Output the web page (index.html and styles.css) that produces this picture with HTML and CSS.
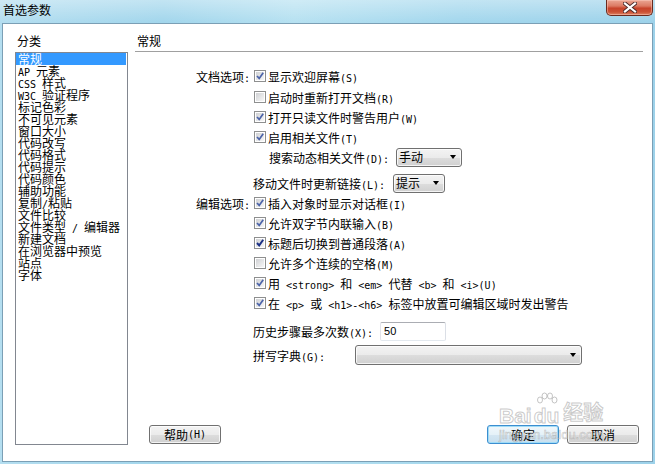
FILE: index.html
```html
<!DOCTYPE html>
<html lang="zh-CN">
<head>
<meta charset="utf-8">
<title>首选参数</title>
<link rel="stylesheet" href="styles.css">
</head>
<body>
<div class="window">
  <div class="titlebar">
    <span class="title">首选参数</span>
    <span class="close">
      <svg width="14" height="11" viewBox="0 0 14 11"><path d="M2 1.5 L12 9.5 M12 1.5 L2 9.5" stroke="#4a2a2a" stroke-width="4" stroke-linecap="square" fill="none"/><path d="M2 1.5 L12 9.5 M12 1.5 L2 9.5" stroke="#fff" stroke-width="2.2" stroke-linecap="square" fill="none"/></svg>
    </span>
  </div>
  <div class="client">
    <div class="side">
      <div class="side-label">分类</div>
      <ul class="list">
        <li class="sel">常规</li>
        <li><span class="l">AP </span>元素</li>
        <li><span class="l">CSS </span>样式</li>
        <li><span class="l">W3C </span>验证程序</li>
        <li>标记色彩</li>
        <li>不可见元素</li>
        <li>窗口大小</li>
        <li>代码改写</li>
        <li>代码格式</li>
        <li>代码提示</li>
        <li>代码颜色</li>
        <li>辅助功能</li>
        <li>复制<span class="l">/</span>粘贴</li>
        <li>文件比较</li>
        <li>文件类型<span class="l"> / </span>编辑器</li>
        <li>新建文档</li>
        <li>在浏览器中预览</li>
        <li>站点</li>
        <li>字体</li>
      </ul>
    </div>
    <div class="main">
      <div class="heading">常规</div>
      <div class="form">
        <div class="row">
          <span class="lbl">文档选项<span class="l">:</span></span>
          <span class="cb"><svg width="8" height="8" viewBox="0 0 8 8"><path d="M1 4 L3.2 6.4 L7.2 0.8" stroke="#4b63a9" stroke-width="1.7" fill="none"/></svg></span>
          <span>显示欢迎屏幕<span class="l">(S)</span></span>
        </div>
        <div class="row g1">
          <span class="lbl"></span>
          <span class="cb"></span>
          <span>启动时重新打开文档<span class="l">(R)</span></span>
        </div>
        <div class="row">
          <span class="lbl"></span>
          <span class="cb"><svg width="8" height="8" viewBox="0 0 8 8"><path d="M1 4 L3.2 6.4 L7.2 0.8" stroke="#4b63a9" stroke-width="1.7" fill="none"/></svg></span>
          <span>打开只读文件时警告用户<span class="l">(W)</span></span>
        </div>
        <div class="row">
          <span class="lbl"></span>
          <span class="cb"><svg width="8" height="8" viewBox="0 0 8 8"><path d="M1 4 L3.2 6.4 L7.2 0.8" stroke="#4b63a9" stroke-width="1.7" fill="none"/></svg></span>
          <span>启用相关文件<span class="l">(T)</span></span>
        </div>
        <div class="row">
          <span class="lbl"></span>
          <span class="sub">搜索动态相关文件<span class="l">(D):</span></span>
          <span class="combo c-manual">手动<i class="arrow"></i></span>
        </div>
        <div class="row g6">
          <span class="lbl"></span>
          <span>移动文件时更新链接<span class="l">(L):</span></span>
          <span class="combo c-prompt">提示<i class="arrow"></i></span>
        </div>
        <div class="row">
          <span class="lbl">编辑选项<span class="l">:</span></span>
          <span class="cb"><svg width="8" height="8" viewBox="0 0 8 8"><path d="M1 4 L3.2 6.4 L7.2 0.8" stroke="#4b63a9" stroke-width="1.7" fill="none"/></svg></span>
          <span>插入对象时显示对话框<span class="l">(I)</span></span>
        </div>
        <div class="row">
          <span class="lbl"></span>
          <span class="cb"><svg width="8" height="8" viewBox="0 0 8 8"><path d="M1 4 L3.2 6.4 L7.2 0.8" stroke="#4b63a9" stroke-width="1.7" fill="none"/></svg></span>
          <span>允许双字节内联输入<span class="l">(B)</span></span>
        </div>
        <div class="row">
          <span class="lbl"></span>
          <span class="cb"><svg width="8" height="8" viewBox="0 0 8 8"><path d="M1 4 L3.2 6.4 L7.2 0.8" stroke="#1a2f85" stroke-width="1.9" fill="none"/></svg></span>
          <span>标题后切换到普通段落<span class="l">(A)</span></span>
        </div>
        <div class="row">
          <span class="lbl"></span>
          <span class="cb"></span>
          <span>允许多个连续的空格<span class="l">(M)</span></span>
        </div>
        <div class="row">
          <span class="lbl"></span>
          <span class="cb"><svg width="8" height="8" viewBox="0 0 8 8"><path d="M1 4 L3.2 6.4 L7.2 0.8" stroke="#4b63a9" stroke-width="1.7" fill="none"/></svg></span>
          <span>用<span class="l"> &lt;strong&gt; </span>和<span class="l"> &lt;em&gt; </span>代替<span class="l"> &lt;b&gt; </span>和<span class="l"> &lt;i&gt;(U)</span></span>
        </div>
        <div class="row">
          <span class="lbl"></span>
          <span class="cb"><svg width="8" height="8" viewBox="0 0 8 8"><path d="M1 4 L3.2 6.4 L7.2 0.8" stroke="#4b63a9" stroke-width="1.7" fill="none"/></svg></span>
          <span>在<span class="l"> &lt;p&gt; </span>或<span class="l"> &lt;h1&gt;-&lt;h6&gt; </span>标签中放置可编辑区域时发出警告</span>
        </div>
        <div class="row g8">
          <span class="lbl"></span>
          <span>历史步骤最多次数<span class="l">(X):</span></span>
          <span class="txt"><span class="num">50</span></span>
        </div>
        <div class="row g4">
          <span class="lbl"></span>
          <span>拼写字典<span class="l">(G):</span></span>
          <span class="combo c-dict"><i class="arrow"></i></span>
        </div>
      </div>
      <div class="buttons">
        <span class="btn">帮助<span class="l">(H)</span></span>
        <span class="btn def">确定</span>
        <span class="btn">取消</span>
      </div>
    </div>
  </div>
  <div class="watermark">
    <div class="wm-logo"><span class="wm-big">Bai</span><span class="wm-du"><svg class="paw" width="24" height="16" viewBox="0 0 24 16"><g fill="none" stroke="rgba(150,150,150,0.55)" stroke-width="1"><ellipse cx="5" cy="8" rx="2.5" ry="3"/><ellipse cx="9.5" cy="4" rx="2.5" ry="3"/><ellipse cx="15" cy="4" rx="2.5" ry="3"/><ellipse cx="19.5" cy="8" rx="2.5" ry="3"/></g></svg><span class="wm-big">du</span></span><span class="wm-big wm-cn">经验</span></div>
    <div class="wm-url">jingyan.baidu.com</div>
  </div>
</div>
</body>
</html>
```

FILE: styles.css
```css
* { box-sizing: border-box; }
html, body { margin: 0; padding: 0; }
body {
  width: 655px;
  height: 464px;
  overflow: hidden;
  font-family: "Noto Sans CJK SC", "Noto Sans", sans-serif;
  font-size: 12px;
  color: #000;
  background: #fff;
}
.l {
  font-family: "DejaVu Sans Mono", "Liberation Mono", monospace;
  font-size: 10px;
  white-space: pre;
}
.window {
  position: relative;
  width: 655px;
  height: 464px;
  display: flex;
  flex-direction: column;
  background:
    linear-gradient(to bottom, rgba(255,255,255,0.35), rgba(255,255,255,0) 22px),
    linear-gradient(to right, #b4def0 0%, #a2d6ec 25%, #b6e1f1 45%, #a3d7ed 70%, #9dd2ea 100%);
}
.titlebar {
  height: 23px;
  display: flex;
  padding: 0 2px 0 3px;
  flex: none;
}
.title {
  margin-top: 2px;
  line-height: 16px;
  height: 16px;
}
.close {
  margin-left: auto;
  width: 47px;
  height: 16px;
  border: 1px solid #6a2a1e;
  border-top: none;
  border-radius: 0 0 5px 5px;
  background: linear-gradient(to bottom, #eba693 0%, #dc7a63 40%, #c7432a 55%, #cb5236 80%, #de8566 100%);
  box-shadow: inset 0 0 0 1px rgba(255,210,200,0.45);
  display: flex;
  align-items: center;
  justify-content: center;
}
.client {
  flex: 1;
  margin: 0 2px 2px;
  border: 1px solid #7b9fb5;
  background: #fff;
  display: flex;
  gap: 7px;
  padding: 10px 9px 16px 12px;
}
.side {
  width: 113px;
  flex: none;
  display: flex;
  flex-direction: column;
}
.side-label {
  height: 14px;
  line-height: 14px;
  margin-bottom: 4px;
  padding-left: 2px;
}
.list {
  flex: 1;
  margin: 0;
  padding: 0 1px 0 0;
  list-style: none;
  border: 1px solid #828790;
}
.list li {
  height: 12px;
  line-height: 12px;
  padding-left: 2px;
  white-space: nowrap;
}
.list li.sel {
  background: #3399ff;
  color: #fff;
}
.main {
  flex: 1;
  display: flex;
  flex-direction: column;
}
.heading {
  height: 18px;
  line-height: 14px;
  padding-left: 2px;
  border-bottom: 1px solid #a0a0a0;
}
.form {
  margin-top: 14px;
}
.row {
  display: flex;
  align-items: center;
  height: 20px;
  white-space: nowrap;
}
.g1 { margin-top: 1px; }
.g4 { margin-top: 4px; }
.g6 { margin-top: 6px; }
.g8 { margin-top: 8px; }
.lbl {
  width: 118px;
  flex: none;
  text-align: right;
  padding-right: 3px;
}
.cb {
  width: 12px;
  height: 12px;
  flex: none;
  margin-left: 1px;
  margin-right: 2px;
  border: 1px solid #8e8f8f;
  padding: 1px;
  background: linear-gradient(135deg, #cfd1d4, #f7f7f7) content-box;
}
.cb svg { display: block; }
.sub { padding-left: 16px; }
.combo {
  display: flex;
  align-items: center;
  height: 19px;
  border: 1px solid #707070;
  border-radius: 3px;
  background: linear-gradient(to bottom, #f3f3f3 0%, #ebebeb 50%, #dddddd 51%, #d0d0d0 100%);
  box-shadow: inset 0 0 0 1px rgba(255,255,255,0.75);
  padding-left: 2px;
  line-height: 14px;
}
.combo .arrow {
  margin-left: auto;
  margin-right: 5px;
  width: 0;
  height: 0;
  border-top: 4px solid #000;
  border-left: 3.5px solid transparent;
  border-right: 3.5px solid transparent;
}
.c-manual { width: 66px; margin-left: 7px; }
.c-prompt { width: 52px; margin-left: 8px; }
.c-dict { width: 227px; height: 20px; margin-left: 30px; }
.txt {
  width: 66px;
  height: 19px;
  margin-left: 7px;
  border: 1px solid;
  border-color: #abadb3 #dbdfe6 #e3e9ef #e2e3ea;
  border-radius: 2px;
  display: flex;
  align-items: center;
  padding-left: 3px;
}
.num {
  font-family: "Liberation Sans", Arial, sans-serif;
  font-size: 11px;
}
.buttons {
  margin-top: auto;
  margin-bottom: 1px;
  display: flex;
  gap: 8px;
  padding: 0 4px 0 14px;
}
.btn {
  width: 72px;
  height: 19px;
  border: 1px solid #707070;
  border-radius: 3px;
  background: linear-gradient(to bottom, #f3f3f3 0%, #ebebeb 50%, #dddddd 51%, #d0d0d0 100%);
  box-shadow: inset 0 0 0 1px rgba(255,255,255,0.75);
  display: flex;
  align-items: center;
  justify-content: center;
  line-height: 14px;
}
.btn.def {
  margin-left: auto;
  border-color: #3c8ed0;
  box-shadow: inset 0 0 0 1px #9fdcf7;
  background: linear-gradient(to bottom, #f0f7fb 0%, #e5f1f8 50%, #d4e6f2 51%, #c8dfee 100%);
}
.watermark {
  position: absolute;
  left: 499px;
  top: 398px;
  pointer-events: none;
}
.wm-logo {
  display: flex;
  align-items: flex-end;
  height: 28px;
}
.wm-big {
  font-family: "Liberation Sans", Arial, sans-serif;
  font-weight: bold;
  font-size: 21px;
  line-height: 20px;
  color: rgba(255,255,255,0.55);
  -webkit-text-stroke: 1px rgba(150,150,150,0.5);
}
.wm-du {
  position: relative;
  display: flex;
  flex-direction: column;
  align-items: center;
  margin-left: 2px;
}
.paw { display: block; margin-bottom: -2px; }
.wm-cn {
  font-family: "Noto Sans CJK SC", sans-serif;
  font-size: 20px;
  margin-left: 4px;
  align-self: flex-start;
  margin-top: 4px;
}
.wm-url {
  font-family: "Liberation Sans", Arial, sans-serif;
  font-size: 13px;
  line-height: 13px;
  margin-top: 2px;
  color: rgba(255,255,255,0.5);
  -webkit-text-stroke: 0.6px rgba(150,150,150,0.55);
}
```
